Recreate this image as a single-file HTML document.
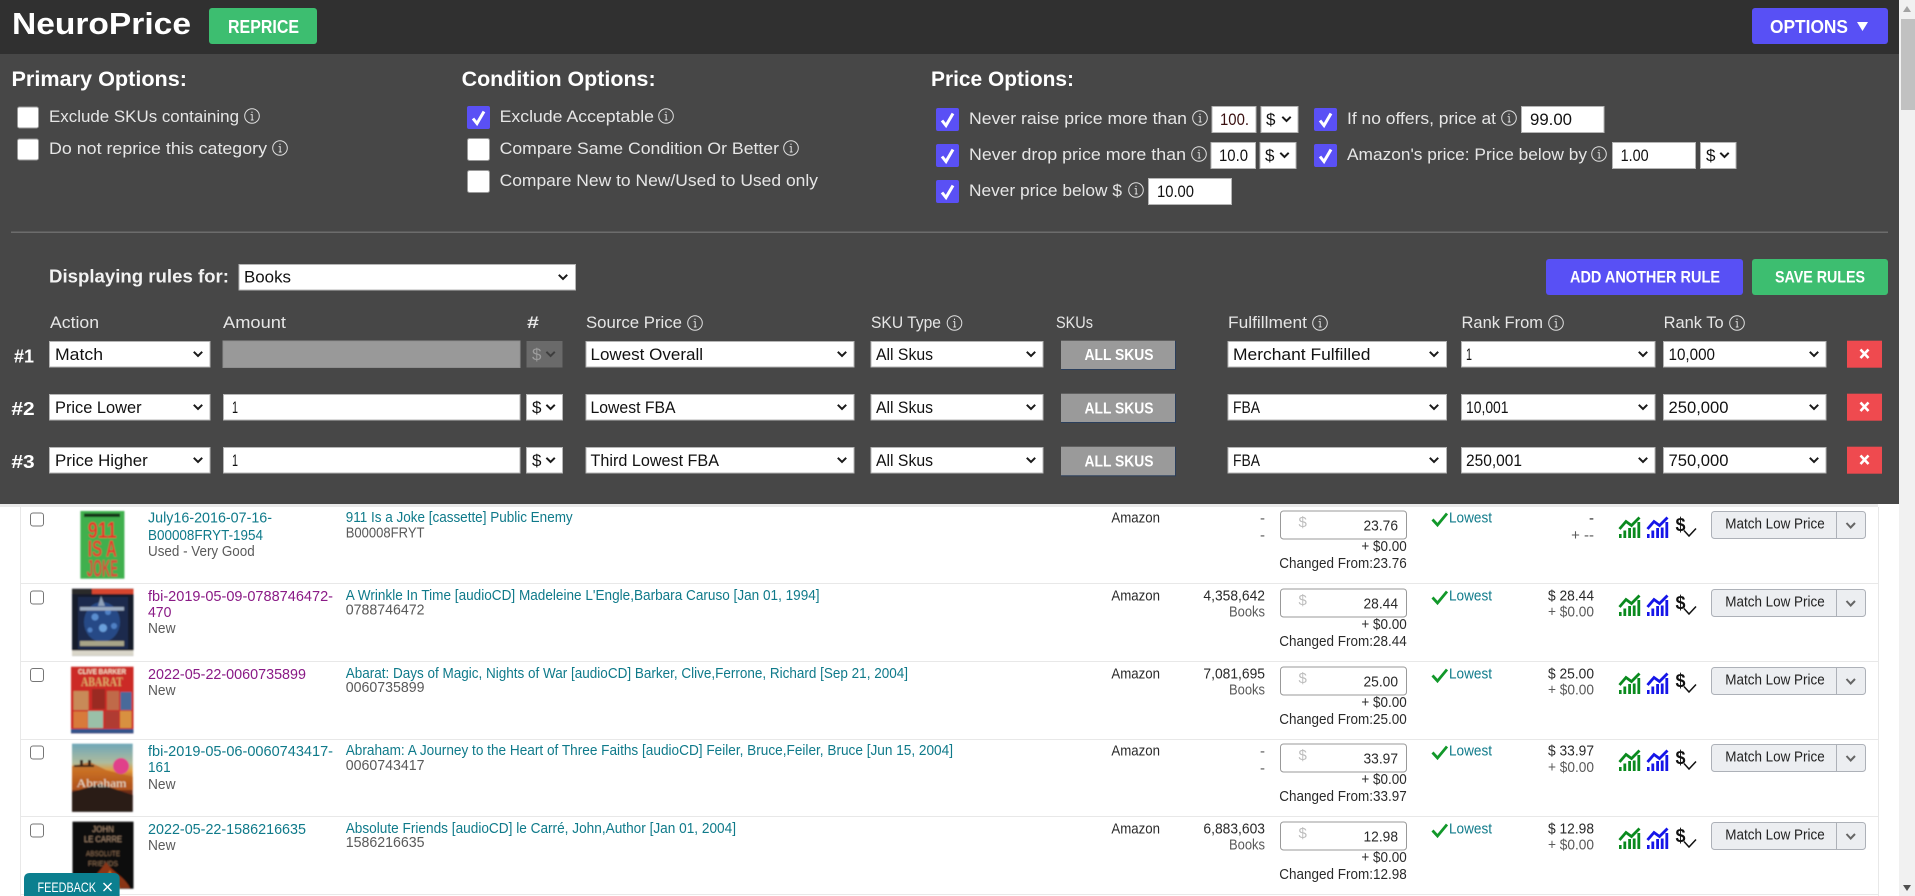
<!DOCTYPE html>
<html lang="en"><head><meta charset="utf-8"><title>NeuroPrice</title>
<style>
html,body{margin:0;padding:0;background:#fff;overflow:hidden;width:1915px;height:896px}
svg{display:block;font-family:"Liberation Sans",sans-serif}
.h{font-size:21px;font-weight:700;fill:#fff}
.l{font-size:17px;fill:#e6e6e6}
.b{font-size:17px;fill:#111}
.w{font-weight:700;fill:#fff}
.s{font-size:15px;fill:#0f7a8a}
.p{font-size:15px;fill:#8a1a86}
.g{font-size:15px;fill:#5a5a5a}
.d{font-size:15px;fill:#2a2a2a}
.box{fill:#fff;stroke:#b5b5b5;stroke-width:1}
</style></head><body>
<svg width="1915" height="896" viewBox="0 0 1915 896" xmlns="http://www.w3.org/2000/svg">
<defs>
<filter id="bl" x="-5%" y="-5%" width="110%" height="110%"><feGaussianBlur stdDeviation="0.7"/></filter>
<path id="c" d="M-4.2-2.2 0 2 4.2-2.2" fill="none" stroke="#1a1a1a" stroke-width="2"/>
<g id="i"><circle cx="8" cy="8" r="7.3" fill="none" stroke="#e0e0e0" stroke-width="1"/><path d="M6.6 6.6H8.2V12M6.8 12H9.6M8 3.6V5" fill="none" stroke="#e0e0e0" stroke-width="1"/></g>
<g id="ck"><rect width="23" height="23" rx="2" fill="#5a50f5"/><path d="M6 12.5 10 17.5 17 5.5" fill="none" stroke="#fff" stroke-width="3"/></g>
<rect id="un" width="21" height="21" rx="2" fill="#fff" stroke="#9a9a9a"/>
<g id="cg"><path d="M0 21V17h2.6V21zM4.4 21V13.5h2.8V21zM9.2 21V11h2.8V21zM13.8 21V10.5h2.8V21zM18.4 21V5h2.8V21z" fill="#0a8a1e"/><path d="M.5 12 7 4.5 12.5 8.5 20.5 .5" fill="none" stroke="#0a8a1e" stroke-width="2.8"/></g>
<g id="cb"><path d="M0 21V17h2.6V21zM4.4 21V13.5h2.8V21zM9.2 21V11h2.8V21zM13.8 21V10.5h2.8V21zM18.4 21V5h2.8V21z" fill="#1515e8"/><path d="M.5 12 7 4.5 12.5 8.5 20.5 .5" fill="none" stroke="#1515e8" stroke-width="2.8"/></g>
<g id="row">
<text class="d" x="1111.4" y="522.7" textLength="48.6" lengthAdjust="spacingAndGlyphs">Amazon</text>
<rect x="1280.5" y="511" width="126" height="28" rx="3" fill="#fff" stroke="#999"/>
<text x="1298.5" y="527" font-size="15" fill="#bdbdbd">$</text>
<path d="M1432.5 519.5 1437.5 525 1447 513.5" fill="none" stroke="#12982a" stroke-width="2.8"/>
<text class="s" x="1449" y="522.7" textLength="43" lengthAdjust="spacingAndGlyphs">Lowest</text>
<use href="#cg" x="1619" y="517"/><use href="#cb" x="1647" y="517"/>
<text x="1675.5" y="531" font-size="19" font-weight="700" fill="#111" textLength="10" lengthAdjust="spacingAndGlyphs">$</text>
<path d="M1684 530.5 1689 536 1696 528.5" fill="none" stroke="#111" stroke-width="1.5"/>
<rect x="1711.5" y="511.5" width="154" height="27" rx="3" fill="#eceef1" stroke="#adb1b8"/>
<path d="M1836.5 512V538" stroke="#adb1b8"/>
<text x="1725.3" y="528.5" font-size="15" fill="#222" textLength="99.4" lengthAdjust="spacingAndGlyphs">Match Low Price</text>
<path d="M1846.5 523 1850.7 527.5 1855 523" fill="none" stroke="#666" stroke-width="2"/>
</g>
</defs>

<!-- backgrounds -->
<rect width="1915" height="896" fill="#fff"/>
<rect width="1899" height="54" fill="#303030"/>
<rect y="54" width="1899" height="450" fill="#474747"/>
<rect x="0" y="504" width="1878" height="3" fill="#e9e9e9"/>
<!-- scrollbar -->
<rect x="1899" width="16" height="896" fill="#f1f1f1"/>
<rect x="1901" y="19" width="14" height="91" fill="#c1c1c1"/>
<path d="M1907 6 1903 12H1911Z" fill="#a3a3a3"/>
<path d="M1907 891 1903 885H1911Z" fill="#505050"/>

<!-- header -->
<text x="12" y="34" font-size="31" font-weight="700" fill="#fff" textLength="179" lengthAdjust="spacingAndGlyphs">NeuroPrice</text>
<rect x="209" y="8" width="108" height="36" rx="3" fill="#3dbe70"/>
<text x="228" y="33" font-size="18" class="w" textLength="71" lengthAdjust="spacingAndGlyphs">REPRICE</text>
<rect x="1752" y="8" width="136" height="36" rx="3" fill="#5850f5"/>
<text x="1770" y="33" font-size="18" class="w" textLength="78" lengthAdjust="spacingAndGlyphs">OPTIONS</text>
<path d="M1857 22H1868L1862.5 31Z" fill="#fff"/>

<!-- options headings -->
<text class="h" x="11.5" y="86" textLength="175.5" lengthAdjust="spacingAndGlyphs">Primary Options:</text>
<text class="h" x="461.6" y="86" textLength="194" lengthAdjust="spacingAndGlyphs">Condition Options:</text>
<text class="h" x="931" y="86" textLength="143" lengthAdjust="spacingAndGlyphs">Price Options:</text>

<!-- primary -->
<use href="#un" x="17.5" y="107"/>
<text class="l" x="49" y="121.8" textLength="190" lengthAdjust="spacingAndGlyphs">Exclude SKUs containing</text><use href="#i" x="244" y="108"/>
<use href="#un" x="17.5" y="139"/>
<text class="l" x="49" y="153.8" textLength="218" lengthAdjust="spacingAndGlyphs">Do not reprice this category</text><use href="#i" x="272" y="140"/>

<!-- condition -->
<use href="#ck" x="467" y="106"/>
<text class="l" x="499.6" y="121.8" textLength="154.4" lengthAdjust="spacingAndGlyphs">Exclude Acceptable</text><use href="#i" x="658" y="108"/>
<rect x="467.5" y="138.5" width="22" height="22" rx="2" fill="#fff" stroke="#9a9a9a"/>
<text class="l" x="499.6" y="153.8" textLength="279.4" lengthAdjust="spacingAndGlyphs">Compare Same Condition Or Better</text><use href="#i" x="783" y="140"/>
<rect x="467.5" y="170.5" width="22" height="22" rx="2" fill="#fff" stroke="#9a9a9a"/>
<text class="l" x="499.6" y="185.8" textLength="318.4" lengthAdjust="spacingAndGlyphs">Compare New to New/Used to Used only</text>

<!-- price -->
<use href="#ck" x="936" y="108"/>
<text class="l" x="969" y="124" textLength="218" lengthAdjust="spacingAndGlyphs">Never raise price more than</text><use href="#i" x="1192" y="110"/>
<rect class="box" x="1212" y="106.5" width="44" height="26"/><text class="b" x="1220" y="125" textLength="29" lengthAdjust="spacingAndGlyphs" style="fill:#3a1010">100.</text>
<rect class="box" x="1261" y="106.5" width="37" height="26"/><text class="b" x="1266" y="125">$</text><use href="#c" x="1286.5" y="119"/>

<use href="#ck" x="936" y="144"/>
<text class="l" x="969" y="160" textLength="217" lengthAdjust="spacingAndGlyphs">Never drop price more than</text><use href="#i" x="1191" y="146"/>
<rect class="box" x="1211" y="142.5" width="44.5" height="26"/><text class="b" x="1219" y="161" textLength="29" lengthAdjust="spacingAndGlyphs">10.0</text>
<rect class="box" x="1260" y="142.5" width="36" height="26"/><text class="b" x="1265" y="161">$</text><use href="#c" x="1284.5" y="155"/>

<use href="#ck" x="936" y="180"/>
<text class="l" x="969" y="196" textLength="153" lengthAdjust="spacingAndGlyphs">Never price below $</text><use href="#i" x="1128" y="182"/>
<rect class="box" x="1148.5" y="178.5" width="83" height="26"/><text class="b" x="1157" y="197" textLength="37" lengthAdjust="spacingAndGlyphs">10.00</text>

<use href="#ck" x="1314" y="108"/>
<text class="l" x="1347" y="124" textLength="149" lengthAdjust="spacingAndGlyphs">If no offers, price at</text><use href="#i" x="1501" y="110"/>
<rect class="box" x="1521.5" y="106.5" width="82.5" height="26"/><text class="b" x="1530" y="125" textLength="42" lengthAdjust="spacingAndGlyphs">99.00</text>

<use href="#ck" x="1314" y="144"/>
<text class="l" x="1347" y="160" textLength="240" lengthAdjust="spacingAndGlyphs">Amazon's price: Price below by</text><use href="#i" x="1591" y="146"/>
<rect class="box" x="1612.5" y="142.5" width="83" height="26"/><text class="b" x="1620.6" y="161" textLength="28" lengthAdjust="spacingAndGlyphs">1.00</text>
<rect class="box" x="1700.5" y="142.5" width="35.5" height="26"/><text class="b" x="1706" y="161">$</text><use href="#c" x="1724.5" y="155"/>

<rect x="11" y="231.5" width="1877" height="1.5" fill="#6c6c6c"/>

<!-- displaying -->
<text x="49" y="282.5" font-size="18" class="w" style="fill:#f2f2f2" textLength="180" lengthAdjust="spacingAndGlyphs">Displaying rules for:</text>
<rect class="box" x="239" y="264.5" width="336.5" height="25.5"/>
<text class="b" x="244" y="282.5" textLength="47" lengthAdjust="spacingAndGlyphs">Books</text><use href="#c" x="563" y="277"/>
<rect x="1546" y="259" width="197" height="36" rx="3" fill="#5850f5"/>
<text x="1570" y="282.5" font-size="17" class="w" textLength="150" lengthAdjust="spacingAndGlyphs">ADD ANOTHER RULE</text>
<rect x="1752" y="259" width="136" height="36" rx="3" fill="#3dbe70"/>
<text x="1775" y="282.5" font-size="17" class="w" textLength="90" lengthAdjust="spacingAndGlyphs">SAVE RULES</text>

<!-- rule headings -->
<text class="l" x="50" y="328" textLength="49" lengthAdjust="spacingAndGlyphs">Action</text>
<text class="l" x="223" y="328" textLength="63" lengthAdjust="spacingAndGlyphs">Amount</text>
<text class="l" x="527" y="328" textLength="12" lengthAdjust="spacingAndGlyphs" font-weight="700">#</text>
<text class="l" x="586" y="328" textLength="96" lengthAdjust="spacingAndGlyphs">Source Price</text><use href="#i" x="687" y="315"/>
<text class="l" x="871" y="328" textLength="70" lengthAdjust="spacingAndGlyphs">SKU Type</text><use href="#i" x="946.5" y="315"/>
<text class="l" x="1056" y="328" textLength="37" lengthAdjust="spacingAndGlyphs">SKUs</text>
<text class="l" x="1228" y="328" textLength="79" lengthAdjust="spacingAndGlyphs">Fulfillment</text><use href="#i" x="1312" y="315"/>
<text class="l" x="1461.5" y="328" textLength="81.5" lengthAdjust="spacingAndGlyphs">Rank From</text><use href="#i" x="1548" y="315"/>
<text class="l" x="1663.6" y="328" textLength="60" lengthAdjust="spacingAndGlyphs">Rank To</text><use href="#i" x="1729" y="315"/>

<!-- rule 1 -->
<text x="14" y="362.7" font-size="18" class="w" textLength="20" lengthAdjust="spacingAndGlyphs">#1</text>
<rect class="box" x="49.5" y="341.5" width="160.5" height="25.5"/><text class="b" x="55" y="360" textLength="48" lengthAdjust="spacingAndGlyphs">Match</text><use href="#c" x="198" y="354"/>
<rect x="223" y="341" width="297" height="26.5" fill="#999" stroke="#8e8e8e"/>
<rect x="526.5" y="341" width="36" height="26.5" fill="#6a6a6a"/><text x="532" y="360" font-size="17" fill="#9c9c9c">$</text><use href="#c" x="550.6" y="354" opacity=".55"/>
<rect class="box" x="586" y="341.5" width="268" height="25.5"/><text class="b" x="590.5" y="360" textLength="112.5" lengthAdjust="spacingAndGlyphs">Lowest Overall</text><use href="#c" x="842" y="354"/>
<rect class="box" x="871" y="341.5" width="172" height="25.5"/><text class="b" x="876" y="360" textLength="57" lengthAdjust="spacingAndGlyphs">All Skus</text><use href="#c" x="1031" y="354"/>
<rect x="1061" y="341" width="115" height="29" fill="#2b3f5c"/><rect x="1061" y="340.7" width="114" height="28.3" fill="#9a9a9a"/>
<text x="1084.5" y="360" font-size="16" class="w" textLength="69" lengthAdjust="spacingAndGlyphs">ALL SKUS</text>
<rect class="box" x="1228" y="341.5" width="218.5" height="25.5"/><text class="b" x="1233" y="360" textLength="137.5" lengthAdjust="spacingAndGlyphs">Merchant Fulfilled</text><use href="#c" x="1434" y="354"/>
<rect class="box" x="1461.5" y="341.5" width="193.5" height="25.5"/><text class="b" x="1466" y="360" textLength="6" lengthAdjust="spacingAndGlyphs">1</text><use href="#c" x="1643" y="354"/>
<rect class="box" x="1663.5" y="341.5" width="162.5" height="25.5"/><text class="b" x="1668.5" y="360" textLength="46.5" lengthAdjust="spacingAndGlyphs">10,000</text><use href="#c" x="1814" y="354"/>
<rect x="1847" y="340.7" width="35" height="27" fill="#ef4a4f"/><path d="M1860.5 349.5 1868.5 358M1868.5 349.5 1860.5 358" stroke="#fff" stroke-width="2.6"/>

<!-- rule 2 -->
<text x="11.4" y="415" font-size="18" class="w" textLength="23.3" lengthAdjust="spacingAndGlyphs">#2</text>
<rect class="box" x="49.5" y="394.5" width="160.5" height="25.5"/><text class="b" x="55" y="413" textLength="86.6" lengthAdjust="spacingAndGlyphs">Price Lower</text><use href="#c" x="198" y="407"/>
<rect class="box" x="223.5" y="394.5" width="296.5" height="25.5"/><text class="b" x="232" y="413" textLength="6" lengthAdjust="spacingAndGlyphs">1</text>
<rect class="box" x="526.5" y="394.5" width="36" height="25.5"/><text class="b" x="532" y="413">$</text><use href="#c" x="550.6" y="407"/>
<rect class="box" x="586" y="394.5" width="268" height="25.5"/><text class="b" x="590.5" y="413" textLength="85" lengthAdjust="spacingAndGlyphs">Lowest FBA</text><use href="#c" x="842" y="407"/>
<rect class="box" x="871" y="394.5" width="172" height="25.5"/><text class="b" x="876" y="413" textLength="57" lengthAdjust="spacingAndGlyphs">All Skus</text><use href="#c" x="1031" y="407"/>
<rect x="1061" y="394" width="115" height="29" fill="#2b3f5c"/><rect x="1061" y="393.7" width="114" height="28.3" fill="#9a9a9a"/>
<text x="1084.5" y="413.3" font-size="16" class="w" textLength="69" lengthAdjust="spacingAndGlyphs">ALL SKUS</text>
<rect class="box" x="1228" y="394.5" width="218.5" height="25.5"/><text class="b" x="1233" y="413" textLength="27" lengthAdjust="spacingAndGlyphs">FBA</text><use href="#c" x="1434" y="407"/>
<rect class="box" x="1461.5" y="394.5" width="193.5" height="25.5"/><text class="b" x="1466" y="413" textLength="42.5" lengthAdjust="spacingAndGlyphs">10,001</text><use href="#c" x="1643" y="407"/>
<rect class="box" x="1663.5" y="394.5" width="162.5" height="25.5"/><text class="b" x="1668.5" y="413" textLength="60" lengthAdjust="spacingAndGlyphs">250,000</text><use href="#c" x="1814" y="407"/>
<rect x="1847" y="393.7" width="35" height="27" fill="#ef4a4f"/><path d="M1860.5 402.5 1868.5 411M1868.5 402.5 1860.5 411" stroke="#fff" stroke-width="2.6"/>

<!-- rule 3 -->
<text x="11.4" y="468" font-size="18" class="w" textLength="23.3" lengthAdjust="spacingAndGlyphs">#3</text>
<rect class="box" x="49.5" y="447.5" width="160.5" height="25.5"/><text class="b" x="55" y="466" textLength="92.8" lengthAdjust="spacingAndGlyphs">Price Higher</text><use href="#c" x="198" y="460"/>
<rect class="box" x="223.5" y="447.5" width="296.5" height="25.5"/><text class="b" x="232" y="466" textLength="6" lengthAdjust="spacingAndGlyphs">1</text>
<rect class="box" x="526.5" y="447.5" width="36" height="25.5"/><text class="b" x="532" y="466">$</text><use href="#c" x="550.6" y="460"/>
<rect class="box" x="586" y="447.5" width="268" height="25.5"/><text class="b" x="590.5" y="466" textLength="128.5" lengthAdjust="spacingAndGlyphs">Third Lowest FBA</text><use href="#c" x="842" y="460"/>
<rect class="box" x="871" y="447.5" width="172" height="25.5"/><text class="b" x="876" y="466" textLength="57" lengthAdjust="spacingAndGlyphs">All Skus</text><use href="#c" x="1031" y="460"/>
<rect x="1061" y="447" width="115" height="29.3" fill="#2b3f5c"/><rect x="1061" y="446.7" width="114" height="28.6" fill="#9a9a9a"/>
<text x="1084.5" y="466.3" font-size="16" class="w" textLength="69" lengthAdjust="spacingAndGlyphs">ALL SKUS</text>
<rect class="box" x="1228" y="447.5" width="218.5" height="25.5"/><text class="b" x="1233" y="466" textLength="27" lengthAdjust="spacingAndGlyphs">FBA</text><use href="#c" x="1434" y="460"/>
<rect class="box" x="1461.5" y="447.5" width="193.5" height="25.5"/><text class="b" x="1466" y="466" textLength="56" lengthAdjust="spacingAndGlyphs">250,001</text><use href="#c" x="1643" y="460"/>
<rect class="box" x="1663.5" y="447.5" width="162.5" height="25.5"/><text class="b" x="1668.5" y="466" textLength="60" lengthAdjust="spacingAndGlyphs">750,000</text><use href="#c" x="1814" y="460"/>
<rect x="1847" y="446.7" width="35" height="27" fill="#ef4a4f"/><path d="M1860.5 455.5 1868.5 464M1868.5 455.5 1860.5 464" stroke="#fff" stroke-width="2.6"/>

<!-- table frame -->
<path d="M20.5 507V896M1878.5 507V896" stroke="#e8e8e8"/>
<path d="M21 583.5H1878M21 661.5H1878M21 739.5H1878M21 816.5H1878M21 894.5H1878" stroke="#e8e8e8"/>

<!-- checkboxes -->
<rect x="30.5" y="513" width="13" height="13" rx="2.5" fill="#fff" stroke="#767676"/>
<rect x="30.5" y="591" width="13" height="13" rx="2.5" fill="#fff" stroke="#767676"/>
<rect x="30.5" y="668.5" width="13" height="13" rx="2.5" fill="#fff" stroke="#767676"/>
<rect x="30.5" y="746" width="13" height="13" rx="2.5" fill="#fff" stroke="#767676"/>
<rect x="30.5" y="824" width="13" height="13" rx="2.5" fill="#fff" stroke="#767676"/>

<!-- covers -->
<g filter="url(#bl)">
<rect x="80.4" y="511" width="44" height="67.7" fill="#3fb04e"/>
<rect x="84" y="513.5" width="36" height="3.5" fill="#123018"/>
<text x="102.3" y="538" font-size="23" font-weight="700" fill="#ea2f2c" text-anchor="middle" textLength="29" lengthAdjust="spacingAndGlyphs">911</text>
<text x="102.3" y="556.5" font-size="23" font-weight="700" fill="#e8372f" text-anchor="middle" textLength="29" lengthAdjust="spacingAndGlyphs">IS A</text>
<text x="102.3" y="576.5" font-size="24" font-weight="700" fill="#d8493a" text-anchor="middle" textLength="31" lengthAdjust="spacingAndGlyphs">JOKE</text>
</g>

<g filter="url(#bl)">
<rect x="72" y="588.7" width="61.5" height="67" fill="#141c2c"/>
<rect x="72" y="589" width="20" height="5" fill="#2b2b2b"/><rect x="92" y="589" width="41.5" height="5" fill="#d8452e"/>
<rect x="72" y="650.5" width="61.5" height="5.2" fill="#d9d6c9"/>
<rect x="78" y="597" width="50" height="52" fill="#1b2c4e"/>
<ellipse cx="102" cy="622" rx="18" ry="20" fill="#274a86"/>
<circle cx="95" cy="617" r="3.5" fill="#5a8ed0"/><circle cx="108" cy="612" r="3" fill="#4f80c4"/><circle cx="103" cy="628" r="4" fill="#6aa0dc"/><circle cx="90" cy="630" r="2.5" fill="#4f80c4"/><circle cx="114" cy="626" r="3" fill="#4f80c4"/>
<path d="M101 596 105 606H98Z" fill="#8ea0b8"/>
<rect x="80" y="607" width="44" height="3.5" fill="#9aaac0"/><rect x="80" y="641" width="44" height="5" fill="#a8a488"/>
</g>

<g filter="url(#bl)">
<rect x="71" y="666.7" width="62.5" height="66.6" fill="#cc2b26"/>
<text x="102" y="674" font-size="7.5" font-weight="700" fill="#f4dcc4" text-anchor="middle" textLength="48" lengthAdjust="spacingAndGlyphs">CLIVE BARKER</text>
<text x="102" y="686" font-size="13" font-family="Liberation Serif" font-weight="700" fill="#dca868" text-anchor="middle" textLength="42" lengthAdjust="spacingAndGlyphs">ABARAT</text>
<rect x="73.5" y="691" width="15" height="19" fill="#c88a58"/><rect x="92" y="689" width="13" height="20" fill="#9a2a24"/><rect x="107" y="691" width="12" height="19" fill="#c06a4a"/><rect x="120.5" y="692" width="11" height="18" fill="#4a6a9a"/>
<rect x="73.5" y="711.5" width="14" height="16.5" fill="#d87a3a"/><rect x="88" y="711" width="15" height="17" fill="#9ac0a8"/><rect x="105" y="711" width="14" height="17" fill="#b03a30"/><rect x="120" y="711" width="11.5" height="17" fill="#d89040"/>
<rect x="71" y="729" width="62.5" height="4.3" fill="#30528a"/>
</g>

<linearGradient id="ab" x1="0" y1="0" x2="0" y2="1"><stop offset="0" stop-color="#6ea6b8"/><stop offset=".28" stop-color="#aebb9c"/><stop offset=".4" stop-color="#e39a3a"/><stop offset=".62" stop-color="#8a3414"/><stop offset="1" stop-color="#1c1818"/></linearGradient>
<g filter="url(#bl)">
<rect x="72" y="743.7" width="60.7" height="68" fill="url(#ab)"/>
<path d="M72 766 90 762 106 770 132.7 777V790H72Z" fill="#c0621e" opacity=".75"/>
<path d="M74 765h20v2h-20zM80 760h3v6h-3zM88 760h3v6h-3z" fill="#3a2414"/>
<circle cx="121" cy="766" r="8" fill="#e0408a"/>
<path d="M72 792 100 784 132.7 795V811.7H72Z" fill="#2a1a18"/>
<text x="101.5" y="787" font-size="12" font-family="Liberation Serif" fill="#e8ddc8" text-anchor="middle" textLength="50" lengthAdjust="spacingAndGlyphs">Abraham</text>
</g>

<g filter="url(#bl)">
<rect x="72.5" y="821.7" width="61" height="67" fill="#0a0a0a"/>
<text x="103" y="832" font-size="8" fill="#a88a70" text-anchor="middle">JOHN</text>
<text x="103" y="842" font-size="8" fill="#a88a70" text-anchor="middle" textLength="38" lengthAdjust="spacingAndGlyphs">LE CARRE</text>
<text x="103" y="856" font-size="7" fill="#8a6a50" text-anchor="middle" textLength="34" lengthAdjust="spacingAndGlyphs">ABSOLUTE</text>
<text x="103" y="866" font-size="7" fill="#8a6a50" text-anchor="middle" textLength="30" lengthAdjust="spacingAndGlyphs">FRIENDS</text>
<path d="M90 888C92 876 100 872 106 862 112 872 124 876 130 888Z" fill="#8a3414"/>
<path d="M100 888C103 880 106 878 110 870 113 878 118 882 120 888Z" fill="#c9702a"/>
</g>

<!-- SKU column -->
<text class="s" x="148" y="522.7" textLength="124" lengthAdjust="spacingAndGlyphs">July16-2016-07-16-</text>
<text class="s" x="148" y="540" textLength="115" lengthAdjust="spacingAndGlyphs">B00008FRYT-1954</text>
<text class="g" x="148" y="556" textLength="106.7" lengthAdjust="spacingAndGlyphs">Used - Very Good</text>

<text class="p" x="148" y="601" textLength="185" lengthAdjust="spacingAndGlyphs">fbi-2019-05-09-0788746472-</text>
<text class="p" x="148" y="617" textLength="23.4" lengthAdjust="spacingAndGlyphs">470</text>
<text class="g" x="148" y="633" textLength="27.5" lengthAdjust="spacingAndGlyphs">New</text>

<text class="p" x="148" y="679" textLength="158" lengthAdjust="spacingAndGlyphs">2022-05-22-0060735899</text>
<text class="g" x="148" y="695" textLength="27.5" lengthAdjust="spacingAndGlyphs">New</text>

<text class="s" x="148" y="756" textLength="185" lengthAdjust="spacingAndGlyphs">fbi-2019-05-06-0060743417-</text>
<text class="s" x="148" y="772" textLength="22.6" lengthAdjust="spacingAndGlyphs">161</text>
<text class="g" x="148" y="789" textLength="27.5" lengthAdjust="spacingAndGlyphs">New</text>

<text class="s" x="148" y="834" textLength="158" lengthAdjust="spacingAndGlyphs">2022-05-22-1586216635</text>
<text class="g" x="148" y="850" textLength="27.5" lengthAdjust="spacingAndGlyphs">New</text>

<!-- titles -->
<text class="s" x="345.7" y="522" textLength="227" lengthAdjust="spacingAndGlyphs">911 Is a Joke [cassette] Public Enemy</text>
<text class="g" x="345.7" y="537.3" textLength="78.8" lengthAdjust="spacingAndGlyphs">B00008FRYT</text>
<text class="s" x="345.7" y="600" textLength="473.9" lengthAdjust="spacingAndGlyphs">A Wrinkle In Time [audioCD] Madeleine L'Engle,Barbara Caruso [Jan 01, 1994]</text>
<text class="g" x="345.7" y="614.3" textLength="78.8" lengthAdjust="spacingAndGlyphs">0788746472</text>
<text class="s" x="345.7" y="678" textLength="562.3" lengthAdjust="spacingAndGlyphs">Abarat: Days of Magic, Nights of War [audioCD] Barker, Clive,Ferrone, Richard [Sep 21, 2004]</text>
<text class="g" x="345.7" y="692" textLength="78.8" lengthAdjust="spacingAndGlyphs">0060735899</text>
<text class="s" x="345.7" y="755" textLength="607.3" lengthAdjust="spacingAndGlyphs">Abraham: A Journey to the Heart of Three Faiths [audioCD] Feiler, Bruce,Feiler, Bruce [Jun 15, 2004]</text>
<text class="g" x="345.7" y="770" textLength="78.8" lengthAdjust="spacingAndGlyphs">0060743417</text>
<text class="s" x="345.7" y="833" textLength="390.3" lengthAdjust="spacingAndGlyphs">Absolute Friends [audioCD] le Carré, John,Author [Jan 01, 2004]</text>
<text class="g" x="345.7" y="847" textLength="78.8" lengthAdjust="spacingAndGlyphs">1586216635</text>

<!-- right columns -->
<use href="#row"/>
<use href="#row" y="78"/>
<use href="#row" y="156"/>
<use href="#row" y="233"/>
<use href="#row" y="311"/>

<!-- row 0 -->
<text class="g" x="1265" y="523" text-anchor="end">-</text><text class="g" x="1265" y="540" text-anchor="end">-</text>
<text class="d" x="1363.5" y="530.3" textLength="34.5" lengthAdjust="spacingAndGlyphs">23.76</text>
<text class="d" x="1361.4" y="551" textLength="45.3" lengthAdjust="spacingAndGlyphs">+ $0.00</text>
<text class="d" x="1279.3" y="568" textLength="127.4" lengthAdjust="spacingAndGlyphs">Changed From:23.76</text>
<text class="d" x="1594" y="523" text-anchor="end">-</text><text class="g" x="1594" y="540" text-anchor="end">+ --</text>

<!-- row 1 -->
<text class="d" x="1203.4" y="600.7" textLength="61.6" lengthAdjust="spacingAndGlyphs">4,358,642</text>
<text class="g" x="1229" y="616.7" textLength="36" lengthAdjust="spacingAndGlyphs">Books</text>
<text class="d" x="1363.5" y="608.3" textLength="34.5" lengthAdjust="spacingAndGlyphs">28.44</text>
<text class="d" x="1361.4" y="629" textLength="45.3" lengthAdjust="spacingAndGlyphs">+ $0.00</text>
<text class="d" x="1279.3" y="646" textLength="127.4" lengthAdjust="spacingAndGlyphs">Changed From:28.44</text>
<text class="d" x="1548" y="600.7" textLength="46" lengthAdjust="spacingAndGlyphs">$ 28.44</text>
<text class="g" x="1548" y="616.7" textLength="46" lengthAdjust="spacingAndGlyphs">+ $0.00</text>

<!-- row 2 -->
<text class="d" x="1203.4" y="678.7" textLength="61.6" lengthAdjust="spacingAndGlyphs">7,081,695</text>
<text class="g" x="1229" y="694.7" textLength="36" lengthAdjust="spacingAndGlyphs">Books</text>
<text class="d" x="1363.5" y="686.3" textLength="34.5" lengthAdjust="spacingAndGlyphs">25.00</text>
<text class="d" x="1361.4" y="707" textLength="45.3" lengthAdjust="spacingAndGlyphs">+ $0.00</text>
<text class="d" x="1279.3" y="724" textLength="127.4" lengthAdjust="spacingAndGlyphs">Changed From:25.00</text>
<text class="d" x="1548" y="678.7" textLength="46" lengthAdjust="spacingAndGlyphs">$ 25.00</text>
<text class="g" x="1548" y="694.7" textLength="46" lengthAdjust="spacingAndGlyphs">+ $0.00</text>

<!-- row 3 -->
<text class="g" x="1265" y="756" text-anchor="end">-</text><text class="g" x="1265" y="773" text-anchor="end">-</text>
<text class="d" x="1363.5" y="763.3" textLength="34.5" lengthAdjust="spacingAndGlyphs">33.97</text>
<text class="d" x="1361.4" y="784" textLength="45.3" lengthAdjust="spacingAndGlyphs">+ $0.00</text>
<text class="d" x="1279.3" y="801" textLength="127.4" lengthAdjust="spacingAndGlyphs">Changed From:33.97</text>
<text class="d" x="1548" y="755.7" textLength="46" lengthAdjust="spacingAndGlyphs">$ 33.97</text>
<text class="g" x="1548" y="772" textLength="46" lengthAdjust="spacingAndGlyphs">+ $0.00</text>

<!-- row 4 -->
<text class="d" x="1203.4" y="833.7" textLength="61.6" lengthAdjust="spacingAndGlyphs">6,883,603</text>
<text class="g" x="1229" y="849.7" textLength="36" lengthAdjust="spacingAndGlyphs">Books</text>
<text class="d" x="1363.5" y="841.3" textLength="34.5" lengthAdjust="spacingAndGlyphs">12.98</text>
<text class="d" x="1361.4" y="862" textLength="45.3" lengthAdjust="spacingAndGlyphs">+ $0.00</text>
<text class="d" x="1279.3" y="879" textLength="127.4" lengthAdjust="spacingAndGlyphs">Changed From:12.98</text>
<text class="d" x="1548" y="833.7" textLength="46" lengthAdjust="spacingAndGlyphs">$ 12.98</text>
<text class="g" x="1548" y="849.7" textLength="46" lengthAdjust="spacingAndGlyphs">+ $0.00</text>

<!-- feedback -->
<path d="M24 896V879Q24 873 30 873H113.6Q119.6 873 119.6 879V896Z" fill="#0b7f8f"/>
<text x="37.5" y="892" font-size="14" fill="#fff" textLength="58.5" lengthAdjust="spacingAndGlyphs">FEEDBACK</text>
<path d="M103.5 883 111.5 891M111.5 883 103.5 891" stroke="#fff" stroke-width="1.4"/>
</svg>
</body></html>
